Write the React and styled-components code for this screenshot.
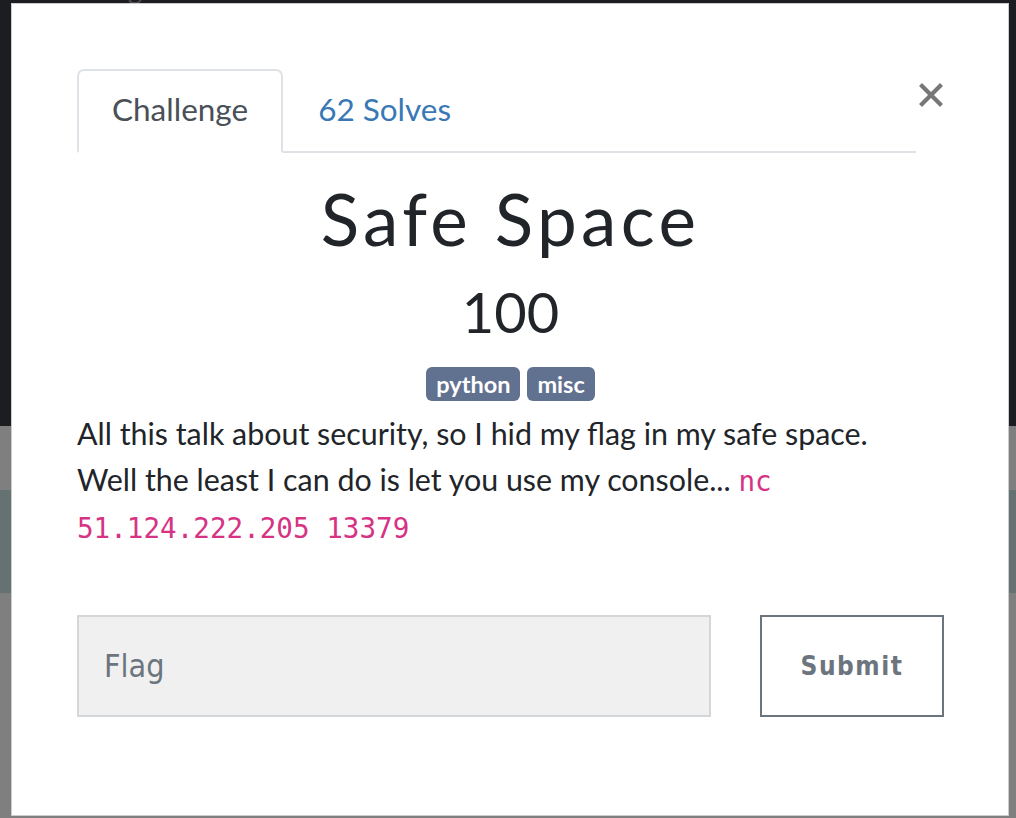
import React from 'react';
import styled, { createGlobalStyle } from 'styled-components';

const GlobalStyle = createGlobalStyle`
  html, body {
    margin: 0;
    padding: 0;
    height: 100%;
    overflow: hidden;
  }
  body {
    font-family: Lato, "Open Sans", sans-serif;
    background: #ffffff;
  }
`;

export default function App() {
  return (
    <>
      <GlobalStyle />
      <Page>
        <Navbar>
          <NavLink>Challenges</NavLink>
          <NavRight>
            <NavIcon />
            <NavLink>Notifications</NavLink>
          </NavRight>
        </Navbar>
        <Jumbotron />
        <Spacer />
        <InfoBand />
      </Page>
      <Backdrop />
      <Modal>
        <Header>
          <Tabs>
            <Tab active>Challenge</Tab>
            <Tab>62 Solves</Tab>
          </Tabs>
          <CloseButton aria-label="Close">
            <svg width="24" height="24" viewBox="0 0 24 24">
              <path d="M3 3 L21 21 M21 3 L3 21" stroke="#777" strokeWidth="4.2" strokeLinecap="square" />
            </svg>
          </CloseButton>
        </Header>
        <Title>Safe Space</Title>
        <Points>100</Points>
        <Tags>
          <Tag>python</Tag>
          <Tag>misc</Tag>
        </Tags>
        <Description>
          All this talk about security, so I hid my flag in my safe space. Well the least I can do is let you use my
          console... <Code>nc 51.124.222.205 13379</Code>
        </Description>
        <SubmitRow>
          <FlagInput placeholder="Flag" />
          <SubmitButton>Submit</SubmitButton>
        </SubmitRow>
      </Modal>
    </>
  );
}

const Page = styled.div`
  height: 818px;
  display: flex;
  flex-direction: column;
`;

const Navbar = styled.div`
  background: #363a40;
  display: flex;
  justify-content: space-between;
  align-items: center;
  margin-top: -29px;
  padding: 0 0 0 36px;
  height: 34px;
`;

const NavLink = styled.span`
  color: #95999e;
  font-size: 28px;
`;

const NavRight = styled.div`
  display: flex;
  align-items: center;
  gap: 20px;
  margin-right: -40px;
`;

const NavIcon = styled.span`
  width: 19px;
  height: 19px;
  background: #95999e;
  border-radius: 2px;
`;

const Jumbotron = styled.div`
  background: #363a40;
  height: 421px;
`;

const Spacer = styled.div`
  height: 64px;
`;

const InfoBand = styled.div`
  background: #cde5e5;
  height: 103px;
`;

const Backdrop = styled.div`
  position: fixed;
  inset: 0;
  background: rgba(0, 0, 0, 0.5);
`;

const Modal = styled.div`
  position: fixed;
  top: 3px;
  left: 11px;
  width: 998px;
  height: 813px;
  box-sizing: border-box;
  background: #fff;
  border: 1px solid rgba(0, 0, 0, 0.2);
  padding: 65px 64px 0 65px;
  display: flex;
  flex-direction: column;
`;

const Header = styled.div`
  display: flex;
  align-items: flex-start;
`;

const Tabs = styled.div`
  flex: 1;
  display: flex;
  border-bottom: 2px solid #dee2e6;
`;

const Tab = styled.div`
  font-size: 31.5px;
  line-height: 1.2;
  padding: 20px 33px 22px;
  margin-bottom: -2px;
  color: ${(p) => (p.active ? '#495057' : '#3a78b5')};
  border: 2px solid ${(p) => (p.active ? '#dee2e6' : 'transparent')};
  border-bottom-color: ${(p) => (p.active ? '#fff' : 'transparent')};
  border-radius: 7px 7px 0 0;
  background: ${(p) => (p.active ? '#fff' : 'transparent')};
`;

const CloseButton = styled.button`
  background: none;
  border: 0;
  padding: 0;
  margin: 13px 0 0 2px;
  width: 26px;
  height: 26px;
  display: flex;
  align-items: center;
  justify-content: center;
  cursor: pointer;
`;

const Title = styled.h1`
  margin: 23px 0 0;
  text-align: center;
  font-family: Lato, sans-serif;
  font-weight: 400;
  font-size: 71px;
  letter-spacing: 4.4px;
  line-height: 1.2;
  color: #212529;
`;

const Points = styled.h2`
  margin: 17px 0 0;
  text-align: center;
  font-weight: 400;
  font-size: 56px;
  line-height: 1.2;
  color: #212529;
`;

const Tags = styled.div`
  display: flex;
  justify-content: center;
  gap: 7px;
  margin-top: 22px;
`;

const Tag = styled.span`
  background: #617190;
  color: #fff;
  font-weight: 700;
  font-size: 23.5px;
  line-height: 34px;
  padding: 0 10px;
  border-radius: 6px;
`;

const Description = styled.p`
  margin: 10px 30px 0 0;
  font-size: 30.4px;
  line-height: 45.5px;
  color: #212529;
`;

const Code = styled.code`
  font-family: "DejaVu Sans Mono", "Liberation Mono", monospace;
  font-size: 27.6px;
  color: #d63384;
`;

const SubmitRow = styled.div`
  display: grid;
  grid-template-columns: 634px 184px;
  justify-content: space-between;
  margin-top: 63px;
`;

const FlagInput = styled.input`
  box-sizing: border-box;
  height: 102px;
  background: #f0f0f0;
  border: 2px solid #d4d7da;
  padding: 0 25px;
  font-family: "DejaVu Sans Condensed", Roboto, sans-serif;
  font-size: 32px;
  color: #495057;
  outline: none;
  &::placeholder {
    color: #6c757d;
  }
`;

const SubmitButton = styled.button`
  box-sizing: border-box;
  height: 102px;
  background: #fff;
  border: 2px solid #6c757d;
  font-family: "DejaVu Sans Condensed", Roboto, sans-serif;
  font-weight: 700;
  font-size: 26px;
  letter-spacing: 1.5px;
  color: #6c757d;
  cursor: pointer;
`;
